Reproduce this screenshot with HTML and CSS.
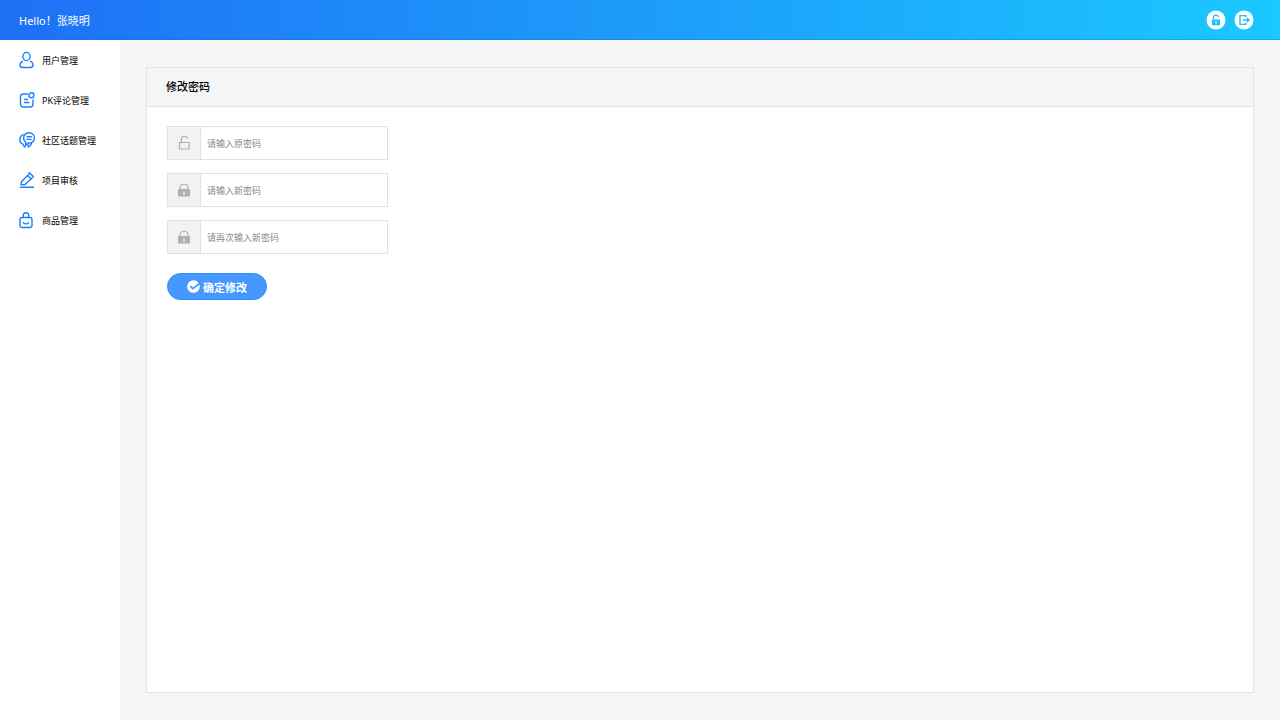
FILE: index.html
```html
<!DOCTYPE html>
<html lang="zh-CN">
<head>
<meta charset="utf-8">
<title>修改密码</title>
<link rel="stylesheet" href="styles.css">
</head>
<body>
<header class="topbar">
  <span class="greeting">Hello！张晓明</span>
  <div class="actions">
    <button class="round" type="button" aria-label="修改密码">
      <svg viewBox="0 0 20 20" width="20" height="20"><circle cx="10" cy="10" r="9.5" fill="#fff"/><path d="M7.4 9.500V7.600c0-3.200 4.800-3.200 5-.3" fill="none" stroke="#1cbfff" stroke-width="1.300"/><path fill-rule="evenodd" d="M6 9.400h8v5.800H6zM9.400 11v2.600h1.200V11z" fill="#1cbfff"/></svg>
    </button>
    <button class="round" type="button" aria-label="退出">
      <svg viewBox="0 0 20 20" width="20" height="20"><circle cx="10" cy="10" r="9.5" fill="#fff"/><path d="M12 7.300V5.600H6v8.800h6v-1.700" fill="none" stroke="#1cbfff" stroke-width="1.400"/><path d="M9 10h5" stroke="#1cbfff" stroke-width="1.500"/><path d="M13 7.300l3.200 2.700-3.200 2.700z" fill="#1cbfff"/></svg>
    </button>
  </div>
</header>
<div class="layout">
  <nav class="sidebar">
    <a class="item" href="#"><svg class="icon" viewBox="0 0 18 18"><ellipse cx="8.500" cy="5.500" rx="3.600" ry="4.100"/><path d="M4.500 10.300C2.900 11 2 12.200 2 14c0 2 1 2.500 2.800 2.500h7.400c1.800 0 2.800-.5 2.800-2.500 0-1.800-.9-3-2.500-3.700"/></svg>用户管理</a>
    <a class="item" href="#"><svg class="icon" viewBox="0 0 18 18"><path d="M9.500 3H5.500C3.300 3 2.500 3.800 2.500 6v7c0 2.200.8 3 3 3H12c2.200 0 3-.8 3-3V9M6.500 8.500h3M6.500 11.500h4.500"/><circle cx="13.400" cy="4.200" r="2.500"/></svg>PK评论管理</a>
    <a class="item" href="#"><svg class="icon" viewBox="0 0 18 18"><path d="M11.200 1.700a5.200 5.200 0 1 1-1 10.300L7.700 14l-.2-3A5.300 5.300 0 0 1 11.200 1.700z"/><path d="M5.500 3.700C.7 5.200.8 11.700 5 13.200l1.300 2.800 1.500-1.600M13.500 12l-.8 2.200-2.400 1.800-.2-3M9 5.700h4.500M9 8.400h4"/></svg>社区话题管理</a>
    <a class="item" href="#"><svg class="icon" viewBox="0 0 18 18"><path d="M2.500 16.300h13M3 13.700l.6-3.200 6-6 3.500 3.200-6 5.800zM9.800 4.500l2-2.200 3.600 3.300-2.100 2.100M11 1.600l1.700 1.500"/></svg>项目审核</a>
    <a class="item" href="#"><svg class="icon" viewBox="0 0 18 18"><path d="M3.800 6.500h8.400c1.300 0 1.800.5 1.800 1.700v6c0 1.700-.7 2.300-2.200 2.300H4.200C2.700 16.500 2 15.900 2 14.200v-6c0-1.200.5-1.700 1.800-1.700zM5.300 6.300V4.500a2.700 2.700 0 0 1 5.400 0v1.800M5.300 11.700c1.300 1.500 4.100 1.500 5.400 0"/></svg>商品管理</a>
  </nav>
  <main class="content">
    <section class="panel">
      <h1 class="title">修改密码</h1>
      <form class="form">
        <div class="field">
          <label class="tag" for="old" aria-label="原密码"><svg viewBox="0 0 16 16" width="16" height="16"><path d="M3.500 7.500h9.500v6.500H3.500zM5.300 7.500V4.500c0-4.200 5.600-4.200 6-.7" fill="none" stroke="#b0b0b0" stroke-width="1.200"/></svg></label>
          <input class="input" id="old" type="password" placeholder="请输入原密码">
        </div>
        <div class="field">
          <label class="tag" for="new" aria-label="新密码"><svg viewBox="0 0 16 16" width="16" height="16"><path d="M4 7.500V6c0-5 8-5 8 0v1.500" fill="none" stroke="#b0b0b0" stroke-width="1.200"/><path fill-rule="evenodd" d="M2.800 7h10.400q.8 0 .8.800v6q0 .8-.8.800H2.800q-.8 0-.8-.8v-6q0-.8.8-.8zM7.300 9.500V13h1.400V9.500z" fill="#b0b0b0"/></svg></label>
          <input class="input" id="new" type="password" placeholder="请输入新密码">
        </div>
        <div class="field">
          <label class="tag" for="again" aria-label="再次输入新密码"><svg viewBox="0 0 16 16" width="16" height="16"><path d="M4 7.500V6c0-5 8-5 8 0v1.500" fill="none" stroke="#b0b0b0" stroke-width="1.200"/><path fill-rule="evenodd" d="M2.800 7h10.400q.8 0 .8.800v6q0 .8-.8.800H2.800q-.8 0-.8-.8v-6q0-.8.8-.8zM7.300 9.500V13h1.400V9.500z" fill="#b0b0b0"/></svg></label>
          <input class="input" id="again" type="password" placeholder="请再次输入新密码">
        </div>
        <button class="submit" type="button"><svg viewBox="0 0 13 13" width="13" height="13"><circle cx="6.500" cy="6.500" r="6.300" fill="#fff"/><path d="M3.300 6.200l2.500 2.400L12.500 3.500" fill="none" stroke="#4498ff" stroke-width="1.700"/></svg>确定修改</button>
      </form>
    </section>
  </main>
</div>
</body>
</html>
```
FILE: styles.css
```css
* { box-sizing: border-box; }

body {
  display: flex;
  flex-direction: column;
  min-height: 100vh;
  margin: 0;
  background: #f5f5f5;
  color: #000;
  font-family: "Noto Sans", "Noto Sans CJK SC", sans-serif;
  font-size: 9px;
}

button, input { font-family: inherit; }

.topbar {
  display: flex;
  align-items: center;
  justify-content: space-between;
  height: 40px;
  padding: 0 26px 0 19px;
  border-bottom: 1px solid rgba(0, 110, 225, 0.3);
  background: linear-gradient(90deg, #1e70f5, #1bc8ff);
  color: #fff;
}

.greeting { font-size: 11px; }

.actions { display: flex; gap: 8px; }

.round {
  display: flex;
  padding: 0;
  border: 0;
  background: none;
  cursor: pointer;
}

.layout { display: flex; flex: 1; }

.sidebar {
  flex: none;
  width: 120px;
  background: #fff;
}

.item {
  display: flex;
  align-items: center;
  gap: 6px;
  height: 40px;
  padding-left: 18px;
  color: #000;
  text-decoration: none;
  white-space: nowrap;
}

.icon {
  flex: none;
  width: 18px;
  height: 18px;
  fill: none;
  stroke: #1581ff;
  stroke-width: 1.4;
  stroke-linecap: round;
  stroke-linejoin: round;
}

.content {
  display: flex;
  flex: 1;
  padding: 27px 26px;
}

.panel {
  flex: 1;
  border: 1px solid #e4e4e4;
  background: #fff;
}

.title {
  margin: 0;
  padding-left: 19px;
  border-bottom: 1px solid #e4e4e4;
  background: #f5f5f5;
  font-size: 11px;
  font-weight: 500;
  line-height: 38px;
}

.form {
  display: flex;
  flex-direction: column;
  align-items: flex-start;
  gap: 13px;
  padding: 19px 20px;
}

.field {
  display: flex;
  width: 221px;
  height: 34px;
  border: 1px solid #e2e2e2;
}

.tag {
  display: flex;
  flex: none;
  align-items: center;
  justify-content: center;
  width: 33px;
  border-right: 1px solid #e2e2e2;
  background: #f2f2f2;
}

.input {
  flex: 1;
  min-width: 0;
  padding: 0 6px;
  border: 0;
  background: #fff;
  font-size: 9px;
}

.input::placeholder { color: #888; }

.submit {
  display: flex;
  align-items: center;
  justify-content: center;
  gap: 3px;
  width: 100px;
  height: 27px;
  margin-top: 6px;
  padding: 0;
  border: 1px solid #338cf5;
  border-radius: 14px;
  background: #4498ff;
  color: #fff;
  font-size: 11px;
  font-weight: 700;
  cursor: pointer;
}
```
